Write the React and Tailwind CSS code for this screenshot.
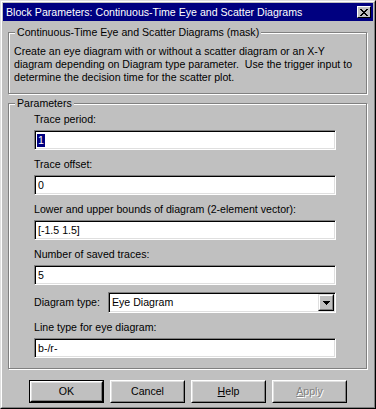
import React from 'react'

const font = { fontFamily: '"Liberation Sans", Arial, sans-serif' }

// champ creusé façon Windows 95
const sunken =
  'border border-t-[#808080] border-l-[#808080] border-r-white border-b-white shadow-[inset_1px_1px_0_#000,inset_-1px_-1px_0_#dfdfdf] bg-white'

const groupBox =
  'ml-[5px] w-[359px] border border-[#808080] shadow-[inset_1px_1px_0_#fff,1px_1px_0_#fff]'

function CloseGlyph() {
  const rows = [
    [0, 1, 6, 7],
    [1, 2, 5, 6],
    [2, 3, 4, 5],
    [3, 4],
    [2, 3, 4, 5],
    [1, 2, 5, 6],
    [0, 1, 6, 7],
  ]
  return (
    <svg width="8" height="7" viewBox="0 0 8 7" shapeRendering="crispEdges">
      {rows.map((cols, y) =>
        cols.map((x) => <rect key={`${x}-${y}`} x={x} y={y} width="1" height="1" fill="#000" />)
      )}
    </svg>
  )
}

function TextField({ label, value, selected }) {
  return (
    <div className="flex flex-col">
      <div className="h-[13px] leading-[13px]">{label}</div>
      <div className={`mt-[4px] h-[20px] w-[302px] flex items-center pl-[2px] ${sunken}`}>
        {selected ? (
          <span className="bg-[#000080] text-white px-[1px] leading-[13px]">{value}</span>
        ) : (
          <span className="px-[1px] leading-[13px]">{value}</span>
        )}
      </div>
    </div>
  )
}

function Button({ children, isDefault, disabled }) {
  const inner = (
    <div className="h-full w-full border border-t-white border-l-white border-r-black border-b-black">
      <div className="h-full w-full border border-t-[#dfdfdf] border-l-[#dfdfdf] border-r-[#808080] border-b-[#808080] flex items-center justify-center">
        {disabled ? (
          <span className="text-[#808080] [text-shadow:1px_1px_0_#fff]">{children}</span>
        ) : (
          <span>{children}</span>
        )}
      </div>
    </div>
  )
  return isDefault ? (
    <div className="w-[75px] h-[23px] border border-black">{inner}</div>
  ) : (
    <div className="w-[75px] h-[23px]">{inner}</div>
  )
}

export default function App() {
  return (
    <div
      className="w-[376px] h-[409px] bg-[#c0c0c0] text-[10.6px] leading-[13px] text-black border border-t-[#dfdfdf] border-l-[#dfdfdf] border-r-black border-b-black"
      style={font}
    >
      <div className="h-full border border-t-white border-l-white border-r-[#808080] border-b-[#808080] p-[1px] flex flex-col">
        {/* barre de titre */}
        <div className="h-[18px] bg-[#000080] text-white flex items-center justify-between pl-[3px] pr-[2px]">
          <span>Block Parameters: Continuous-Time Eye and Scatter Diagrams</span>
          <div className="w-[14px] h-[12px] bg-[#c0c0c0] border border-t-white border-l-white border-r-black border-b-black flex items-center justify-center">
            <CloseGlyph />
          </div>
        </div>

        {/* description */}
        <fieldset className={`mt-[5px] ${groupBox}`}>
          <legend className="ml-[6px] px-[2px] bg-[#c0c0c0]">
            Continuous-Time Eye and Scatter Diagrams (mask)
          </legend>
          <p className="whitespace-pre pl-[5px] pt-[6px] pb-[9px]">
            {'Create an eye diagram with or without a scatter diagram or an X-Y\n'}
            {'diagram depending on Diagram type parameter.  Use the trigger input to\n'}
            {'determine the decision time for the scatter plot.'}
          </p>
        </fieldset>

        {/* paramètres */}
        <fieldset className={`mt-[3px] ${groupBox}`}>
          <legend className="ml-[6px] px-[2px] bg-[#c0c0c0]">Parameters</legend>
          <div className="pl-[25px] pt-[3px] pb-[10px]">
            <div className="flex flex-col gap-[8px]">
              <TextField label="Trace period:" value="1" selected />
              <TextField label="Trace offset:" value="0" />
              <TextField label="Lower and upper bounds of diagram (2-element vector):" value="[-1.5 1.5]" />
              <TextField label="Number of saved traces:" value="5" />
            </div>
            <div className="mt-[7px] flex items-center">
              <span className="w-[74px]">Diagram type:</span>
              <div className={`w-[228px] h-[21px] flex items-center ${sunken}`}>
                <span className="flex-1 pl-[3px]">Eye Diagram</span>
                <div className="w-[16px] h-[17px] mr-[1px] bg-[#c0c0c0] border border-t-[#dfdfdf] border-l-[#dfdfdf] border-r-black border-b-black">
                  <div className="h-full border border-t-white border-l-white border-r-[#808080] border-b-[#808080] flex items-center justify-center">
                    <svg width="7" height="4" viewBox="0 0 7 4" shapeRendering="crispEdges">
                      <path d="M0 0h7v1H0zM1 1h5v1H1zM2 2h3v1H2zM3 3h1v1H3z" fill="#000" />
                    </svg>
                  </div>
                </div>
              </div>
            </div>
            <div className="mt-[8px]">
              <TextField label="Line type for eye diagram:" value="b-/r-" />
            </div>
          </div>
        </fieldset>

        {/* boutons */}
        <div className="mt-[11px] flex justify-center gap-[6px]">
          <Button isDefault>OK</Button>
          <Button>Cancel</Button>
          <Button>
            <span className="underline">H</span>elp
          </Button>
          <Button disabled>
            <span className="underline">A</span>pply
          </Button>
        </div>
      </div>
    </div>
  )
}
